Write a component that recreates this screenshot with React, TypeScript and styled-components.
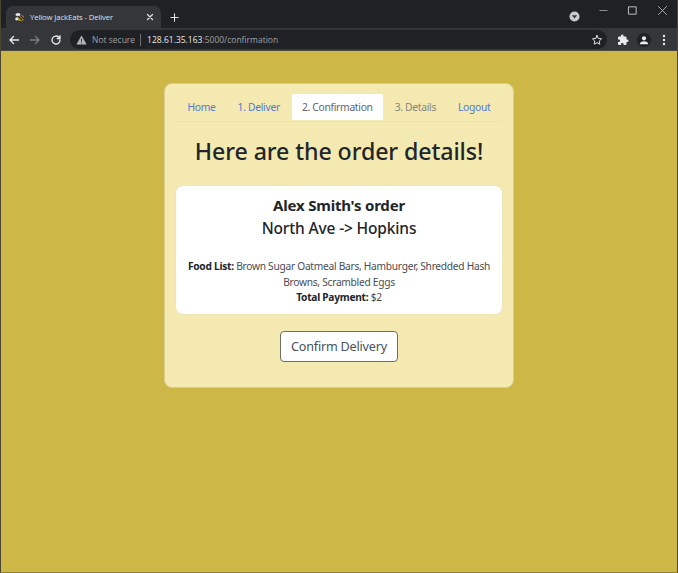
import React from "react";
import styled, { createGlobalStyle } from "styled-components";

const Global = createGlobalStyle`
  html, body { margin: 0; padding: 0; height: 100%; }
  body { font-family: "Noto Sans", "Open Sans", sans-serif; overflow: hidden; }
  #root { height: 100%; }
`;
const Page = styled.div`
  width: 678px; height: 573px; display: flex; flex-direction: column; background: #ccb747;
  box-sizing: border-box; border-left: 1px solid #4a4630; border-right: 1px solid #4a4630; border-bottom: 1px solid #8f8237;
`;
const TitleBar = styled.div`
  height: 28px; background: #202124; display: flex; align-items: flex-end; color: #dee1e6; flex: none; padding-left: 5px;
`;
const Tab = styled.div`
  width: 155px; height: 22px; background: #35363a; border-radius: 7px 7px 0 0; display: flex; align-items: center;
  padding: 0 6px 0 8px; box-sizing: border-box; gap: 4px; font-size: 7.7px; font-family: "Open Sans", sans-serif;
`;
const TabTitle = styled.span` flex: 1; white-space: nowrap; letter-spacing: -0.1px; `;
const NewTab = styled.div` margin: 0 0 2px 8px; height: 18px; display: flex; align-items: center; `;
const Spacer = styled.div` flex: 1; `;
const WindowButtons = styled.div`
  position: absolute; top: 0; right: 1px; display: flex; align-items: center; height: 20px;
`;
const WindowButton = styled.div` width: 29.5px; display: flex; justify-content: center; `;
const MediaIcon = styled.div` margin: 0 97px 6px 0; display: flex; `;
const ToolBar = styled.div`
  height: 23px; background: #35363a; display: flex; align-items: center; flex: none; padding: 1px 8px 0 7px; box-sizing: border-box;
  border-bottom: 1px solid #4a4a42;
`;
const NavIcons = styled.div` display: flex; align-items: center; gap: 9px; margin-right: 8px; `;
const Omnibox = styled.div`
  flex: 1; height: 19px; background: #202124; border-radius: 10px; display: flex; align-items: center; padding: 0 4px 0 6px;
  font-family: "Open Sans", sans-serif; font-size: 8.5px; color: #9aa0a6;
`;
const NotSecure = styled.span` margin-left: 5px; `;
const Sep = styled.span` width: 1px; height: 12px; background: #6b6d70; margin: 0 6px 0 5px; `;
const Host = styled.span` color: #e8eaed; `;
const ToolIcons = styled.div` display: flex; align-items: center; gap: 8px; margin-left: 10px; `;
const Avatar = styled.div`
  width: 14px; height: 14px; border-radius: 50%; background: #202124; display: flex; align-items: center; justify-content: center;
`;
const Content = styled.main`
  flex: 1; display: flex; justify-content: center; align-items: flex-start; padding-top: 32px;
`;
const Card = styled.section`
  width: 350px; height: 305px; box-sizing: border-box; background: #f4e9b1; border: 1px solid #dccf8c; border-radius: 8px;
  padding: 10px 10px 0; display: flex; flex-direction: column; align-items: center;
`;
const Tabs = styled.nav`
  display: flex; align-self: stretch; justify-content: center; gap: 2px; height: 27px; border-bottom: 1px solid #eee3a9;
  font-size: 10.3px; letter-spacing: -0.3px;
`;
const TabLink = styled.a<{ $state?: "active" | "disabled" }>`
  display: flex; align-items: center; height: 26px; padding: 0 10px; white-space: nowrap; border-radius: 2px 2px 0 0;
  color: ${(p) => (p.$state === "active" ? "#5f646a" : p.$state === "disabled" ? "#85857a" : "#5279d2")};
  background: ${(p) => (p.$state === "active" ? "#ffffff" : "transparent")};
`;
const Heading = styled.h1`
  margin: 11px 0 0; font-size: 23.2px; line-height: 36px; font-weight: 500; color: #212529; white-space: nowrap;
  letter-spacing: -0.1px;
`;
const OrderBox = styled.div`
  align-self: stretch; margin-top: 16px; height: 130px; background: #fff; border: 1px solid #efe5b5; border-radius: 8px;
  box-sizing: border-box; text-align: center; color: #212529; padding-top: 8px;
`;
const OrderName = styled.div` font-size: 15px; line-height: 23px; font-weight: 700; letter-spacing: -0.2px; `;
const Route = styled.div` font-size: 15.5px; line-height: 23px; font-weight: 500; letter-spacing: -0.15px; `;
const Details = styled.p`
  margin: 19px 0 0; font-size: 10.2px; line-height: 15.5px; color: #484c51; padding: 0 4px; letter-spacing: -0.27px;
  b { color: #212529; }
`;
const Confirm = styled.button`
  margin-top: 16px; width: 118px; height: 31px; background: #fff; border: 1px solid #6f6f60; border-radius: 4px;
  font-family: inherit; font-size: 12.6px; color: #495057; padding: 0; letter-spacing: -0.2px;
`;

const Ico: React.FC<{ w?: number; c?: string; children: React.ReactNode; sw?: number }> = ({ w = 12, c = "#dee1e6", sw = 1.6, children }) => (
  <svg width={w} height={w} viewBox="0 0 24 24" fill="none" stroke={c} strokeWidth={sw} strokeLinecap="round" strokeLinejoin="round">{children}</svg>
);

export default function App() {
  return (
    <Page>
      <Global />
      <TitleBar>
        <Tab>
          <svg width="12" height="12" viewBox="0 0 12 12">
            <ellipse cx="6.5" cy="7" rx="3.6" ry="3" fill="#b59a35" />
            <path d="M4 5l4 4M6 4l4 4" stroke="#222" strokeWidth="1.2" />
            <ellipse cx="4" cy="3.5" rx="2.6" ry="1.5" fill="#e4e4e0" />
            <circle cx="2.6" cy="8" r="1.4" fill="#eee" />
          </svg>
          <TabTitle>Yellow JackEats - Deliver</TabTitle>
          <Ico w={10} sw={3}><path d="M6 6l12 12M18 6L6 18" /></Ico>
        </Tab>
        <NewTab><Ico w={11} sw={2.4}><path d="M12 4v16M4 12h16" /></Ico></NewTab>
        <Spacer />
        <MediaIcon>
          <svg width="11" height="11" viewBox="0 0 12 12"><circle cx="6" cy="6" r="5.5" fill="#c8cacd" /><path d="M3.2 4.6h5.6L6 8.2z" fill="#35363a" /></svg>
        </MediaIcon>
        <WindowButtons>
          <WindowButton><Ico w={11} sw={1.5} c="#b8babd"><path d="M4 12h16" /></Ico></WindowButton>
          <WindowButton><Ico w={11} sw={2} c="#c8cacd"><rect x="4" y="4" width="16" height="16" /></Ico></WindowButton>
          <WindowButton><Ico w={11} sw={1.7} c="#c8cacd"><path d="M3 3l18 18M21 3L3 21" /></Ico></WindowButton>
        </WindowButtons>
      </TitleBar>
      <ToolBar>
        <NavIcons>
          <Ico w={12} sw={2.6} c="#e8eaed"><path d="M21 12H4M11 5l-7 7 7 7" /></Ico>
          <Ico w={12} sw={2.6} c="#7b7d80"><path d="M3 12h17M13 5l7 7-7 7" /></Ico>
          <Ico w={12} sw={2.6} c="#e8eaed"><path d="M20 12a8 8 0 1 1-2.4-5.7L20 9M20 3.5V9h-5.5" /></Ico>
        </NavIcons>
        <Omnibox>
          <svg width="11" height="10" viewBox="0 0 12 11"><path d="M6 .5L11.6 10.5H.4z" fill="#b4b7ba" /><path d="M6 4v3.2M6 8.2v1" stroke="#202124" strokeWidth="1" /></svg>
          <NotSecure>Not secure</NotSecure>
          <Sep />
          <Host>128.61.35.163</Host><span>:5000/confirmation</span>
          <Spacer />
          <Ico w={12} sw={2} c="#dee1e6"><path d="M12 3l2.8 5.8 6.2.9-4.5 4.4 1.1 6.3-5.6-3-5.6 3 1.1-6.3L3 9.7l6.2-.9z" /></Ico>
        </Omnibox>
        <ToolIcons>
          <svg width="12" height="12" viewBox="0 0 24 24" fill="#e8eaed"><path d="M20.5 11H19V7a2 2 0 0 0-2-2h-4V3.5a2.5 2.5 0 0 0-5 0V5H4a2 2 0 0 0-2 2v3.8h1.5a2.7 2.7 0 0 1 0 5.4H2V20a2 2 0 0 0 2 2h3.8v-1.5a2.7 2.7 0 0 1 5.4 0V22H17a2 2 0 0 0 2-2v-4h1.5a2.5 2.5 0 0 0 0-5z" /></svg>
          <Avatar>
            <svg width="10" height="10" viewBox="0 0 24 24" fill="#e8eaed"><circle cx="12" cy="8" r="5" /><path d="M2 22c0-5 5-7 10-7s10 2 10 7z" /></svg>
          </Avatar>
          <svg width="10" height="12" viewBox="0 0 10 12" fill="#e8eaed"><circle cx="5" cy="2" r="1.2" /><circle cx="5" cy="6" r="1.2" /><circle cx="5" cy="10" r="1.2" /></svg>
        </ToolIcons>
      </ToolBar>
      <Content>
        <Card>
          <Tabs>
            <TabLink>Home</TabLink>
            <TabLink>1. Deliver</TabLink>
            <TabLink $state="active">2. Confirmation</TabLink>
            <TabLink $state="disabled">3. Details</TabLink>
            <TabLink>Logout</TabLink>
          </Tabs>
          <Heading>Here are the order details!</Heading>
          <OrderBox>
            <OrderName>Alex Smith's order</OrderName>
            <Route>North Ave -&gt; Hopkins</Route>
            <Details>
              <b>Food List:</b> Brown Sugar Oatmeal Bars, Hamburger, Shredded Hash Browns, Scrambled Eggs<br />
              <b>Total Payment:</b> $2
            </Details>
          </OrderBox>
          <Confirm>Confirm Delivery</Confirm>
        </Card>
      </Content>
    </Page>
  );
}
